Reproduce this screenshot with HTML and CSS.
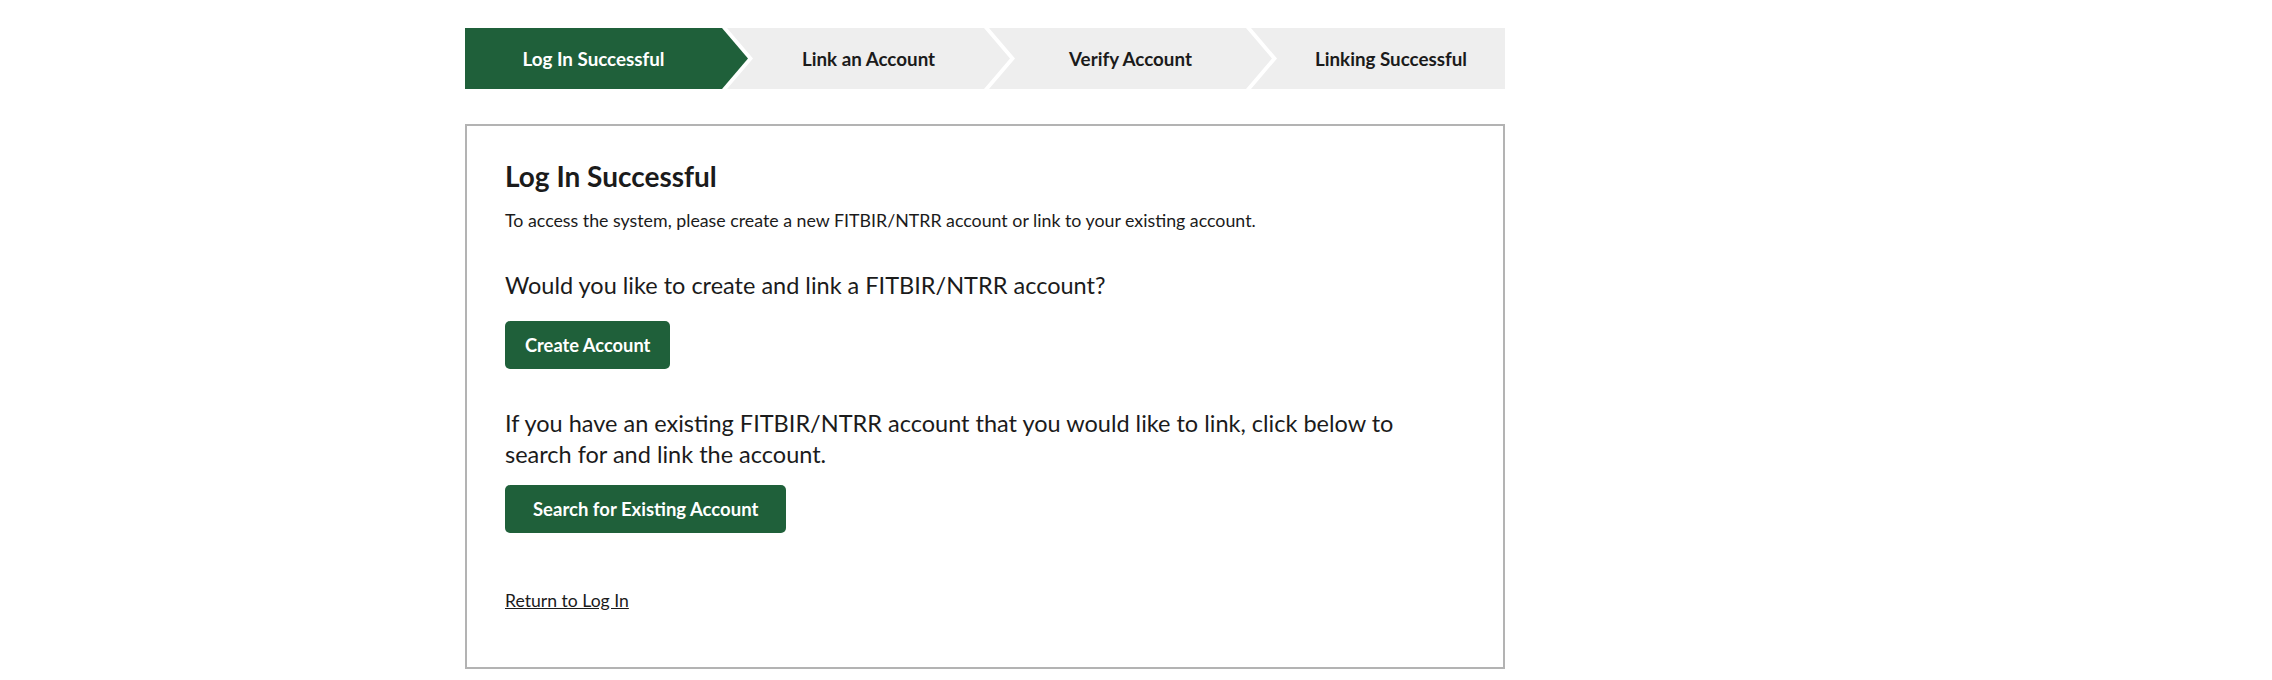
FILE: index.html
```html
<!DOCTYPE html>
<html lang="en">
<head>
    <meta charset="UTF-8">
    <meta name="viewport" content="width=device-width, initial-scale=1.0">
    <title>Log In Successful</title>
    <link rel="stylesheet" href="styles.css">
</head>
<body>
    <div id="wrap">
        <ol class="steps">
            <li class="step current"><span>Log In Successful</span></li>
            <li class="step"><span>Link an Account</span></li>
            <li class="step"><span>Verify Account</span></li>
            <li class="step last"><span>Linking Successful</span></li>
        </ol>
        <div class="panel">
            <h1>Log In Successful</h1>
            <p class="intro">To access the system, please create a new FITBIR/NTRR account or link to your existing account.</p>
            <p class="question">Would you like to create and link a FITBIR/NTRR account?</p>
            <button class="btn">Create Account</button>
            <p class="question long">If you have an existing FITBIR/NTRR account that you would like to link, click below to search for and link the account.</p>
            <button class="btn wide">Search for Existing Account</button>
            <div class="back"><a href="#">Return to Log In</a></div>
        </div>
    </div>
</body>
</html>
```

FILE: styles.css
```css
body{
    margin: 0;
    padding: 0;
    background: #fff;
    font-family: Lato, "Liberation Sans", sans-serif;
    color: #1b1b1b;
}
#wrap{
    width: 1040px;
    margin: 0 0 0 465px;
    padding-top: 28px;
}
/* stepper */
.steps{
    list-style: none;
    margin: 0;
    padding: 0;
    display: flex;
    width: 1040px;
    height: 61px;
}
.step{
    flex: 0 0 283px;
    margin-left: -21px;
    background: #eeeeee;
    display: flex;
    align-items: center;
    justify-content: center;
    padding: 0 26px;
    box-sizing: border-box;
    font-size: 18.8px;
    font-weight: bold;
    clip-path: polygon(0 0, calc(100% - 26px) 0, 100% 50%, calc(100% - 26px) 100%, 0 100%, 26px 50%);
}
.step.current{
    margin-left: 0;
    padding-left: 0;
    background: #1f603a;
    color: #fff;
    clip-path: polygon(0 0, calc(100% - 26px) 0, 100% 50%, calc(100% - 26px) 100%, 0 100%);
}
.step.last{
    flex: 1;
    padding-right: 0;
    clip-path: polygon(0 0, 100% 0, 100% 100%, 0 100%, 26px 50%);
}
/* panel */
.panel{
    margin-top: 35px;
    border: 2px solid #b3b3b3;
    padding: 33px 38px 54px;
}
.panel h1{
    margin: 0;
    font-size: 28px;
    line-height: 34px;
    font-weight: bold;
}
.intro{
    margin: 15px 0 0;
    font-size: 17.8px;
    line-height: 24px;
}
.question{
    margin: 38px 0 0;
    font-size: 23.5px;
    line-height: 30px;
}
.question.long{
    margin-top: 39px;
    max-width: 930px;
    line-height: 31px;
}
.btn{
    display: block;
    margin-top: 21px;
    height: 48px;
    padding: 0 20px;
    border: none;
    border-radius: 5px;
    background: #1f603a;
    color: #fff;
    font-family: inherit;
    font-size: 18.3px;
    font-weight: bold;
}
.btn.wide{
    margin-top: 15px;
    padding: 0 28px;
    font-size: 18.5px;
}
.back{
    margin-top: 56px;
    font-size: 17.6px;
    line-height: 24px;
}
.back a{
    color: #1b1b1b;
}
```
